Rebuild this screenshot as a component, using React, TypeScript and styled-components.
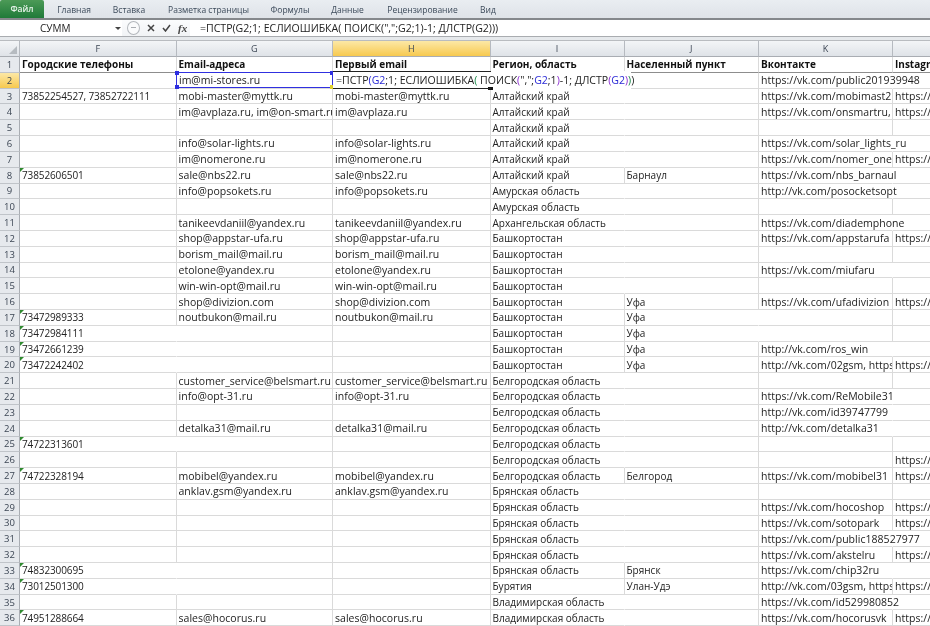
import React from "react";
import styled, { createGlobalStyle, css } from "styled-components";

const Global = createGlobalStyle`
  html, body { margin: 0; padding: 0; width: 930px; height: 626px; overflow: hidden; background: #fff; }
  * { box-sizing: border-box; }
`;

const FONT = `"Open Sans", "Noto Sans", sans-serif`;
const ROW_H = 15.82;
const COLS = "20px 156.5px 156.5px 157.5px 134px 134.5px 134px 133px 40px";

type Kind = "text" | "latin" | "digits";
const kindFont: Record<Kind, string> = {
  text: "font-size: 10px;",
  latin: "font-size: 10.5px; letter-spacing: 0.03px;",
  digits: "font-size: 10px; letter-spacing: -0.12px;",
};

const Page = styled.div`
  width: 930px; height: 626px; overflow: hidden;
  font-family: ${FONT}; color: #1c1c1c; background: #fff;
  display: flex; flex-direction: column;
  filter: blur(0.25px);
`;
const TabBar = styled.div`
  height: 20px; flex: none; display: flex; align-items: stretch;
  background: linear-gradient(#e9edf1, #dfe3e8);
  border-bottom: 2px solid #85888c;
`;
const FileTab = styled.div`
  width: 44px; height: 18px; display: flex; align-items: center; justify-content: center;
  background: linear-gradient(#4c9a57, #1f7a39);
  color: #e8f3ea; font-size: 8.6px; font-weight: 600; border-radius: 2px 2px 0 0;
`;
const Tab = styled.div<{ $w: number }>`
  width: ${p => p.$w}px; display: flex; align-items: center; justify-content: center;
  color: #3c4a5a; font-size: 8.5px; white-space: nowrap;
`;
const FormulaBar = styled.div`
  height: 17px; flex: none; display: flex; align-items: center;
  background: #fff; border-bottom: 1px solid #a9acb0;
`;
const NameBox = styled.div`
  width: 122px; height: 100%; display: flex; align-items: center; font-size: 10px;
  padding-left: 40px; position: relative; color: #222; background:#fff;
`;
const Caret = styled.span`
  position: absolute; right: 1px; top: 7px; width: 0; height: 0;
  border-left: 3px solid transparent; border-right: 3px solid transparent; border-top: 3px solid #444;
`;
const FxGroup = styled.div`
  width: 68px; height: 100%; display: flex; align-items: center; gap: 7px; padding-left: 25px;
  background: linear-gradient(#fbfcfd, #f1f3f5); flex: none; position: relative;
`;
const Knob = styled.div`
  position: absolute; left: 5px; top: 1px; width: 13px; height: 14px; border-radius: 50%;
  background: #fafbfc; border: 1px solid #b3b7bc;
  &::after { content: ""; position: absolute; left: 3px; top: 5px; width: 5px; height: 1px; background: #a9adb2; }
`;
const Fx = styled.span`
  font-family: "Liberation Serif", serif; font-style: italic; font-weight: 700; font-size: 11px; color: #444;
`;
const FormulaText = styled.div`
  flex: 1; padding-left: 10px; font-size: 10.55px; white-space: nowrap; color: #222;
`;
const Gap = styled.div`
  height: 4px; flex: none; background: #e6e9ec; border-bottom: 1px solid #b9bcc0;
`;
const Sheet = styled.div`
  position: relative; flex: 1; overflow: hidden;
`;
const Row = styled.div<{ $h?: number }>`
  display: grid; grid-template-columns: ${COLS};
  height: ${p => p.$h ?? ROW_H}px;
`;
const ColHead = styled.div<{ $active?: boolean }>`
  display: flex; align-items: center; justify-content: center; font-size: 9px;
  color: #3c4654; border-right: 1px solid #b6bac0; border-bottom: 1px solid #a9adb3;
  background: ${p => p.$active ? "linear-gradient(#fce8a6, #f7c94f)" : "linear-gradient(#f3f5f7, #dfe3e8)"};
`;
const Corner = styled(ColHead)`
  align-items: flex-end; justify-content: flex-end; padding: 0 2px 2px 0;
  &::after { content: ""; width: 0; height: 0; border-left: 8px solid transparent; border-bottom: 8px solid #b6bbc0; }
`;
const RowHead = styled.div<{ $active?: boolean }>`
  display: flex; align-items: center; justify-content: center; font-size: 9.5px;
  color: #3c4654; border-right: 1px solid #a9adb3; border-bottom: 1px solid #c0c4c9;
  background: ${p => p.$active ? "linear-gradient(#fce8a6, #f7c94f)" : "#e6e9ed"};
`;
const Cell = styled.div<{ $spill?: boolean; $bold?: boolean; $flag?: boolean; $kind: Kind }>`
  position: relative; display: flex; align-items: center; padding-left: 2px;
  ${p => kindFont[p.$kind]}
  white-space: nowrap; color: #222;
  border-right: 1px solid #dadada; border-bottom: 1px solid #dadada;
  overflow: ${p => p.$spill ? "visible" : "hidden"};
  ${p => p.$spill && css`border-right-color: transparent;`}
  ${p => p.$bold && css`font-size: 10px; letter-spacing: 0; font-weight: 700; color: #111; border-bottom: 1px solid #8d8d8d; overflow: visible;`}
  ${p => p.$flag && css`
    &::before { content: ""; position: absolute; left: 0; top: 0; width: 0; height: 0;
      border-top: 4px solid #2f8a2f; border-right: 4px solid transparent; }
  `}
`;
const RefBox = styled.div`
  position: absolute; left: 176px; top: 31px; width: 157px; height: 16px;
  border: 1px solid #3030e0; font-size: 10.5px; padding-left: 2px; display: flex; align-items: center;
  white-space: nowrap; background: #fff; color: #222;
`;
const Handle = styled.span<{ $x: "left" | "right"; $y: "top" | "bottom"; $c: string }>`
  position: absolute; width: 4px; height: 4px; background: ${p => p.$c};
  ${p => p.$x}: -2px; ${p => p.$y}: -2px;
`;
const Editor = styled.div`
  position: absolute; left: 333px; top: 30px; width: 298px; height: 18px;
  background: #fff; font-size: 10.55px; padding-left: 3px; display: flex; align-items: center; white-space: nowrap; color: #222;
  &::before { content: ""; position: absolute; left: 0; top: 0; width: 158px; height: 1px; background: #222; }
  &::after { content: ""; position: absolute; left: 0; bottom: 0; width: 158px; height: 1px; background: #222; }
`;
const FillHandle = styled.span`
  position: absolute; left: 155px; bottom: -1px; width: 5px; height: 3px; background: #111;
`;
const Paren = styled.span<{ $c: string }>`
  color: ${p => p.$c};
`;
const IconSvg = styled.svg`
  flex: none;
`;

const tabs: [string, number][] = [
  ["Главная", 60], ["Вставка", 50], ["Разметка страницы", 109], ["Формулы", 54],
  ["Данные", 61], ["Рецензирование", 89], ["Вид", 42],
];
const heads = ["F", "G", "H", "I", "J", "K", "L"];
const A = "Алтайский край", B = "Башкортостан", W = "Белгородская область", Y = "Брянская область", V = "Владимирская область";
const I_ = "https://vk";
type R = [string, string, string, string, string, string, string, boolean?];
const rows: R[] = [
  ["Городские телефоны", "Email-адреса", "Первый email", "Регион, область", "Населенный пункт", "Вконтакте", "Instagram"],
  ["", "", "", "", "", "https://vk.com/public201939948", ""],
  ["73852254527, 73852722111", "mobi-master@myttk.ru", "mobi-master@myttk.ru", A, "", "https://vk.com/mobimast2", I_],
  ["", "im@avplaza.ru, im@on-smart.ru", "im@avplaza.ru", A, "", "https://vk.com/onsmartru,", I_],
  ["", "", "", A, "", "", ""],
  ["", "info@solar-lights.ru", "info@solar-lights.ru", A, "", "https://vk.com/solar_lights_ru", ""],
  ["", "im@nomerone.ru", "im@nomerone.ru", A, "", "https://vk.com/nomer_one", I_],
  ["73852606501", "sale@nbs22.ru", "sale@nbs22.ru", A, "Барнаул", "https://vk.com/nbs_barnaul", "", true],
  ["", "info@popsokets.ru", "info@popsokets.ru", "Амурская область", "", "http://vk.com/posocketsopt", ""],
  ["", "", "", "Амурская область", "", "", ""],
  ["", "tanikeevdaniil@yandex.ru", "tanikeevdaniil@yandex.ru", "Архангельская область", "", "https://vk.com/diademphone", ""],
  ["", "shop@appstar-ufa.ru", "shop@appstar-ufa.ru", B, "", "https://vk.com/appstarufa", I_],
  ["", "borism_mail@mail.ru", "borism_mail@mail.ru", B, "", "", ""],
  ["", "etolone@yandex.ru", "etolone@yandex.ru", B, "", "https://vk.com/miufaru", ""],
  ["", "win-win-opt@mail.ru", "win-win-opt@mail.ru", B, "", "", ""],
  ["", "shop@divizion.com", "shop@divizion.com", B, "Уфа", "https://vk.com/ufadivizion", I_],
  ["73472989333", "noutbukon@mail.ru", "noutbukon@mail.ru", B, "Уфа", "", "", true],
  ["73472984111", "", "", B, "Уфа", "", "", true],
  ["73472661239", "", "", B, "Уфа", "http://vk.com/ros_win", "", true],
  ["73472242402", "", "", B, "Уфа", "http://vk.com/02gsm, https", I_, true],
  ["", "customer_service@belsmart.ru", "customer_service@belsmart.ru", W, "", "", ""],
  ["", "info@opt-31.ru", "info@opt-31.ru", W, "", "https://vk.com/ReMobile31", ""],
  ["", "", "", W, "", "http://vk.com/id39747799", ""],
  ["", "detalka31@mail.ru", "detalka31@mail.ru", W, "", "http://vk.com/detalka31", ""],
  ["74722313601", "", "", W, "", "", "", true],
  ["", "", "", W, "", "", I_],
  ["74722328194", "mobibel@yandex.ru", "mobibel@yandex.ru", W, "Белгород", "https://vk.com/mobibel31", I_, true],
  ["", "anklav.gsm@yandex.ru", "anklav.gsm@yandex.ru", Y, "", "", ""],
  ["", "", "", Y, "", "https://vk.com/hocoshop", I_],
  ["", "", "", Y, "", "https://vk.com/sotopark", I_],
  ["", "", "", Y, "", "https://vk.com/public188527977", ""],
  ["", "", "", Y, "", "https://vk.com/akstelru", I_],
  ["74832300695", "", "", Y, "Брянск", "https://vk.com/chip32ru", "", true],
  ["73012501300", "", "", "Бурятия", "Улан-Удэ", "http://vk.com/03gsm, https", I_, true],
  ["", "", "", V, "", "https://vk.com/id529980852", ""],
  ["74951288664", "sales@hocorus.ru", "sales@hocorus.ru", V, "", "https://vk.com/hocorusvk", I_, true],
];

const kindOf = (s: string): Kind =>
  /^[\d, ]+$/.test(s) ? "digits" : /^[\x00-\x7f]+$/.test(s) ? "latin" : "text";

const Blue = "#2a2ad6", Green = "#1a8a4a", Purple = "#8a2ad0";

export default function App() {
  return (
    <Page>
      <Global />
      <TabBar>
        <FileTab>Файл</FileTab>
        {tabs.map(([t, w]) => <Tab key={t} $w={w}>{t}</Tab>)}
      </TabBar>
      <FormulaBar>
        <NameBox>СУММ<Caret /></NameBox>
        <FxGroup>
          <Knob />
          <IconSvg width="8" height="8" viewBox="0 0 8 8"><path d="M1 1l6 6M7 1L1 7" stroke="#444" strokeWidth="1.5" /></IconSvg>
          <IconSvg width="9" height="8" viewBox="0 0 9 8"><path d="M1 4l2.5 3L8 1" stroke="#444" strokeWidth="1.5" fill="none" /></IconSvg>
          <Fx>fx</Fx>
        </FxGroup>
        <FormulaText>=ПСТР(G2;1; ЕСЛИОШИБКА( ПОИСК(",";G2;1)-1; ДЛСТР(G2)))</FormulaText>
      </FormulaBar>
      <Gap />
      <Sheet>
        <Row $h={16}>
          <Corner />
          {heads.map(h => <ColHead key={h} $active={h === "H"}>{h}</ColHead>)}
        </Row>
        {rows.map((r, i) => (
          <Row key={i}>
            <RowHead $active={i === 1}>{i + 1}</RowHead>
            {r.slice(0, 7).map((v, j) => (
              <Cell key={j} $kind={kindOf(v as string)} $bold={i === 0} $flag={j === 0 && !!r[7]}
                $spill={!!v && j < 6 && !r[j + 1]}>{v as string}</Cell>
            ))}
          </Row>
        ))}
        <RefBox>
          im@mi-stores.ru
          <Handle $x="left" $y="top" $c="#2e2ee0" />
          <Handle $x="left" $y="bottom" $c="#2e2ee0" />
          <Handle $x="right" $y="top" $c="#2e2ee0" />
          <Handle $x="right" $y="bottom" $c="#e0d02e" />
        </RefBox>
        <Editor>
          <span>=ПСТР<Paren $c={Blue}>(</Paren><Paren $c={Blue}>G2</Paren>;1; ЕСЛИОШИБКА<Paren $c={Green}>(</Paren> ПОИСК<Paren $c={Purple}>(</Paren>",";<Paren $c={Blue}>G2</Paren>;1<Paren $c={Purple}>)</Paren>-1; ДЛСТР<Paren $c={Purple}>(</Paren><Paren $c={Blue}>G2</Paren><Paren $c={Purple}>)</Paren><Paren $c={Green}>)</Paren>)</span>
          <FillHandle />
        </Editor>
      </Sheet>
    </Page>
  );
}
